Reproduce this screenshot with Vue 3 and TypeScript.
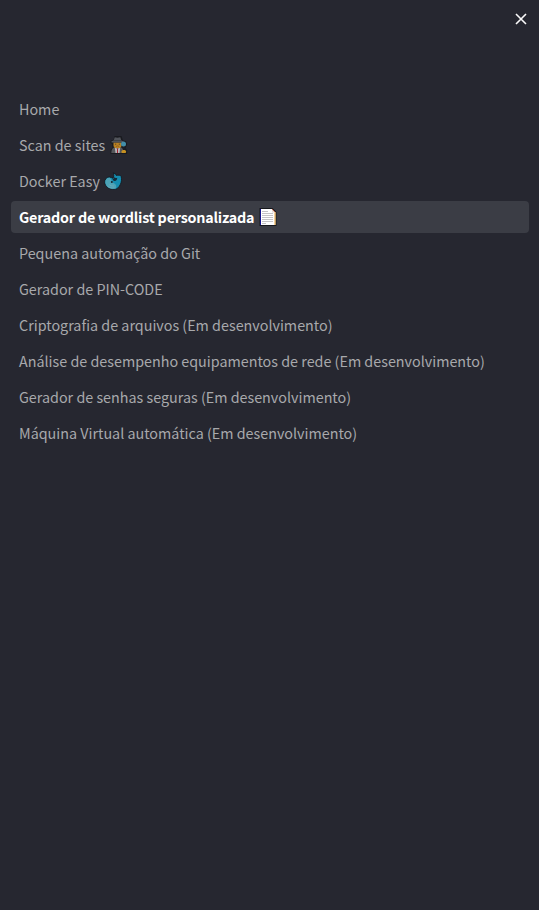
<script setup lang="ts">
interface NavItem {
  label: string
  icon?: 'detective' | 'whale' | 'page'
  active?: boolean
}

const items: NavItem[] = [
  { label: 'Home' },
  { label: 'Scan de sites', icon: 'detective' },
  { label: 'Docker Easy', icon: 'whale' },
  { label: 'Gerador de wordlist personalizada', icon: 'page', active: true },
  { label: 'Pequena automação do Git' },
  { label: 'Gerador de PIN-CODE' },
  { label: 'Criptografia de arquivos (Em desenvolvimento)' },
  { label: 'Análise de desempenho equipamentos de rede (Em desenvolvimento)' },
  { label: 'Gerador de senhas seguras (Em desenvolvimento)' },
  { label: 'Máquina Virtual automática (Em desenvolvimento)' },
]
</script>

<template>
  <aside class="sidebar">
    <header class="top">
      <button class="close" type="button" aria-label="Close">
        <svg width="20" height="20" viewBox="0 0 20 20" fill="none">
          <path d="M5 5 15 15M15 5 5 15" stroke="#fafafa" stroke-width="1.6" />
        </svg>
      </button>
    </header>
    <nav>
      <ul class="list">
        <li v-for="item in items" :key="item.label">
          <a class="link" :class="{ active: item.active }">
            <span class="label">{{ item.label }}</span>
            <svg v-if="item.icon === 'detective'" class="icon" viewBox="0 0 18 18">
              <path d="M.5 18v-4l2-2.500L2 8 .3 6.500 1 4.500 3.500 4 4.500 0h7L13 4.500l3 .8 1.200 3-1.700 4 1.700 2V18Z" fill="#191a1f" />
              <path d="M1.300 17c0-3.500 1.200-5.500 3.700-5.500h5.500c2 0 3 2 3 5.500Z" fill="#54565a" />
              <path d="M3.500 6.500h8v3c0 1.800-1.500 3-4 3s-4-1.200-4-3Z" fill="#b88022" />
              <path d="M3.700 4.500 4.700 1.200 7.500 1.800l2.800-.6 1 3.300 2 .8v1.200H1.500V5.300Z" fill="#51545a" />
              <path d="M3.800 4.600h7.400" stroke="#34363b" stroke-width=".7" />
              <path d="M5 8.200h1.200M8.800 8.200H10" stroke="#57401f" stroke-width=".9" />
              <path d="m6 10.500 1.500-.6 1.500.6" stroke="#765321" stroke-width=".6" fill="none" />
              <path d="m4.800 11.700 2.700 1.100 2.700-1.100L9.500 17h-4Z" fill="#b5b5b8" />
              <path d="M7 12.600h1V17H7Z" fill="#a61f30" />
              <path d="m13.800 10 .2 4" stroke="#202127" stroke-width="1.300" />
              <circle cx="13.500" cy="8" r="2.500" fill="#438ea8" />
              <path d="M11.500 15.500c0-1 1-1.600 2-1.600H15l1.200 1.400-.5 1.700h-4Z" fill="#c69021" />
            </svg>
            <svg v-else-if="item.icon === 'whale'" class="icon" viewBox="0 0 18 18">
              <path d="M9.300.6 12 2.500l.3 1c2-.8 4.500-.2 4.900.9.6 2.700.4 6-1 8.300-1 2-2.500 4.500-5.700 4.600C5.500 17.500 1 15 .8 10.500.6 7.500 2.500 5 5.300 5c1.700 0 2.700 1 3.700 1.200 1-1.500 1-3.500.3-5.600Z" fill="#158db0" stroke="#17191f" stroke-width=".9" />
              <path d="M1.300 10c0-2.700 1.500-4.300 4-4.300 2.200.2 2.200 4.500 4 5.300 2 .8 3.700 2 2.700 5.500-3.500.9-7.200 0-9-2.300-1-1.300-1.700-2.500-1.700-4.200Z" fill="#4da3b7" />
              <path d="M8.500 6.800c1.300-.2 1.600-1 2-1.900.4 1 1.200 1.300 2.700.8 0 1.900-.7 2.900-2 3.200-1.200.3-2.300-.4-2.700-2.100Z" fill="#142b36" />
              <circle cx="7.800" cy="10" r="1" fill="#17232b" />
              <path d="M3.500 14c2 2 4.500 2.300 7 1.900M5 12.500c1.300 1.300 3 1.500 5 1.500" stroke="#82afba" stroke-width=".5" fill="none" />
            </svg>
            <svg v-else-if="item.icon === 'page'" class="icon" viewBox="0 0 18 18">
              <path d="M.5 0h13L17.500 4v14H.5Z" fill="#17181d" />
              <path d="M1.500 1H13l3.500 3.500V17h-15Z" fill="#fff" />
              <path d="M1.500 1v16" stroke="#12128c" />
              <path d="M16 4v13" stroke="#eba332" />
              <path d="M13 1l3.500 3.500H13Z" fill="#e8ded6" />
              <path d="m13 1 3.300 3.300" stroke="#a64227" stroke-width=".8" />
              <path d="M3 3.500h6M3 5.500h11M3 7.500h11M3 9.500h11M3 11.500h11M3 13.500h11M3 15.500h4" stroke="#aaa9ad" stroke-width=".7" />
            </svg>
          </a>
        </li>
      </ul>
    </nav>
  </aside>
</template>

<style>
body {
  background: #262730;
}
</style>

<style scoped>
.sidebar {
  box-sizing: border-box;
  min-height: 910px;
  background: #262730;
  font-family: "Noto Sans CJK SC", "Noto Sans", sans-serif;
}
.top {
  display: flex;
  justify-content: flex-end;
  height: 84px;
  padding: 9px 8px 0 0;
}
.close {
  display: flex;
  width: 20px;
  height: 20px;
  padding: 0;
  border: 0;
  background: transparent;
}
.list {
  display: flex;
  flex-direction: column;
  gap: 4px;
  margin: 0;
  padding: 0 10px 0 11px;
  list-style: none;
}
.link {
  display: flex;
  align-items: center;
  height: 32px;
  padding: 0 8px;
  border-radius: 4px;
  color: #a8a9ac;
  font-size: 14.34px;
  line-height: 32px;
  white-space: nowrap;
}
.active {
  background: #3b3d45;
  color: #fff;
  font-weight: 700;
  letter-spacing: -0.21px;
}
.icon {
  flex: none;
  width: 18px;
  height: 18px;
  margin-left: 4.5px;
}
</style>
